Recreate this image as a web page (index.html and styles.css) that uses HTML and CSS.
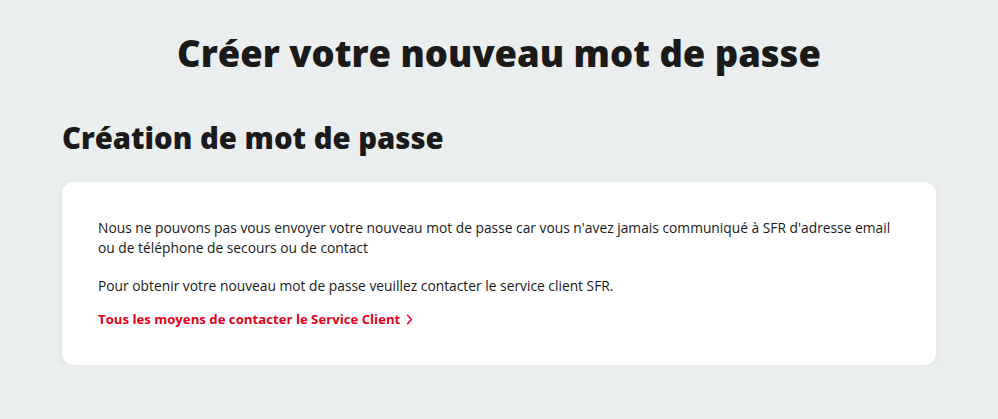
FILE: index.html
```html
<!DOCTYPE html>
<html lang="fr">
<head>
<meta charset="utf-8">
<title>Créer votre nouveau mot de passe</title>
<link rel="stylesheet" href="styles.css">
</head>
<body>
<main class="page">
  <h1 class="title">Créer votre nouveau mot de passe</h1>
  <h2 class="subtitle">Création de mot de passe</h2>
  <section class="card">
    <p class="text">Nous ne pouvons pas vous envoyer votre nouveau mot de passe car vous n'avez jamais communiqué à SFR d'adresse email ou de téléphone de secours ou de contact</p>
    <p class="text text-last">Pour obtenir votre nouveau mot de passe veuillez contacter le service client SFR.</p>
    <a class="link" href="#">Tous les moyens de contacter le Service Client
      <svg class="chev" width="7" height="11" viewBox="0 0 7 11" aria-hidden="true"><path d="M1.6 1.3 L5.4 5.5 L1.6 9.7" fill="none" stroke="currentColor" stroke-width="1.5" stroke-linecap="round" stroke-linejoin="round"/></svg>
    </a>
  </section>
</main>
</body>
</html>
```

FILE: styles.css
```css
* { box-sizing: border-box; }
html, body { margin: 0; padding: 0; }
body {
  background: #ebeeef;
  font-family: "Open Sans", "DejaVu Sans", sans-serif;
  color: #1a1a1a;
}
.page {
  padding: 28px 62px 0;
  display: flex;
  flex-direction: column;
}
.title {
  margin: 0;
  text-align: center;
  font-size: 36.4px;
  font-weight: 800;
  line-height: 50px;
}
.subtitle {
  margin: 40px 0 0;
  font-size: 29.3px;
  font-weight: 800;
  line-height: 40px;
}
.card {
  margin-top: 24px;
  background: #fff;
  border-radius: 12px;
  box-shadow: 0 2px 10px rgba(0,0,0,0.06);
  padding: 36px 36px 36px;
  display: flex;
  flex-direction: column;
  align-items: flex-start;
}
.text {
  margin: 0 0 18px;
  font-size: 13.8px;
  line-height: 20px;
}
.text-last { margin-bottom: 13px; }
.link {
  color: #e2001a;
  font-weight: 700;
  font-size: 13.2px;
  line-height: 20px;
  text-decoration: none;
  display: inline-flex;
  align-items: center;
  gap: 6px;
}
.chev { display: block; }
```
